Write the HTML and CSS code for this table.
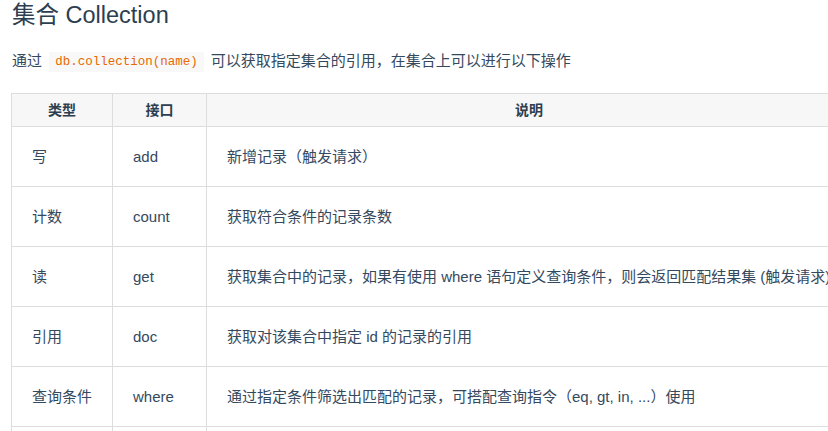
FILE: index.html
```html
<!DOCTYPE html>
<html lang="zh-CN">
<head>
<meta charset="utf-8">
<title>集合 Collection</title>
<link rel="stylesheet" href="styles.css">
</head>
<body>
<div class="page">
  <h2 class="title">集合 Collection</h2>
  <p class="intro">通过 <code class="code">db.collection(name)</code> 可以获取指定集合的引用，在集合上可以进行以下操作</p>
  <table class="api">
    <colgroup>
      <col class="c-type">
      <col class="c-api">
      <col class="c-desc">
    </colgroup>
    <thead>
      <tr><th>类型</th><th>接口</th><th>说明</th></tr>
    </thead>
    <tbody>
      <tr><td>写</td><td>add</td><td>新增记录（触发请求）</td></tr>
      <tr><td>计数</td><td>count</td><td>获取符合条件的记录条数</td></tr>
      <tr><td>读</td><td>get</td><td>获取集合中的记录，如果有使用 where 语句定义查询条件，则会返回匹配结果集 (触发请求)</td></tr>
      <tr><td>引用</td><td>doc</td><td>获取对该集合中指定 id 的记录的引用</td></tr>
      <tr><td>查询条件</td><td>where</td><td>通过指定条件筛选出匹配的记录，可搭配查询指令（eq, gt, in, ...）使用</td></tr>
      <tr><td></td><td>skip</td><td>指定查询时从命中的记录列表中的第几项之后开始返回</td></tr>
    </tbody>
  </table>
</div>
</body>
</html>
```

FILE: styles.css
```css
html, body {
  margin: 0;
  padding: 0;
  overflow: hidden;
  background: #fff;
}
.page {
  width: 828px;
  height: 431px;
  overflow: hidden;
  padding-left: 11px;
  box-sizing: border-box;
  font-family: "Liberation Sans", "Noto Sans CJK SC", sans-serif;
  color: #34495e;
}
.title {
  margin: 0;
  padding-left: 1px;
  font-size: 23.5px;
  font-weight: normal;
  line-height: 30px;
  color: #2c3e50;
}
.intro {
  margin: 16px 0 0 1px;
  font-size: 15px;
  line-height: 30px;
}
.code {
  display: inline-block;
  font-family: "Liberation Mono", monospace;
  font-size: 12.5px;
  line-height: 20px;
  padding: 0 6px;
  margin: 0 3px;
  background: #f8f8f8;
  color: #e96900;
  border-radius: 2px;
  vertical-align: 1px;
}
.api {
  margin-top: 17px;
  border-collapse: collapse;
  width: 841px;
  table-layout: fixed;
  font-size: 15px;
}
.c-type { width: 101px; }
.c-api { width: 94px; }
.api th, .api td {
  border: 1px solid #dddddd;
}
.api th {
  background: #f7f7f7;
  font-size: 14px;
  font-weight: bold;
  color: #2c3e50;
  line-height: 22px;
  padding: 5px 0;
  text-align: center;
}
.api td {
  line-height: 23px;
  padding: 18px 0 18px 20px;
  white-space: nowrap;
  overflow: hidden;
}
```
